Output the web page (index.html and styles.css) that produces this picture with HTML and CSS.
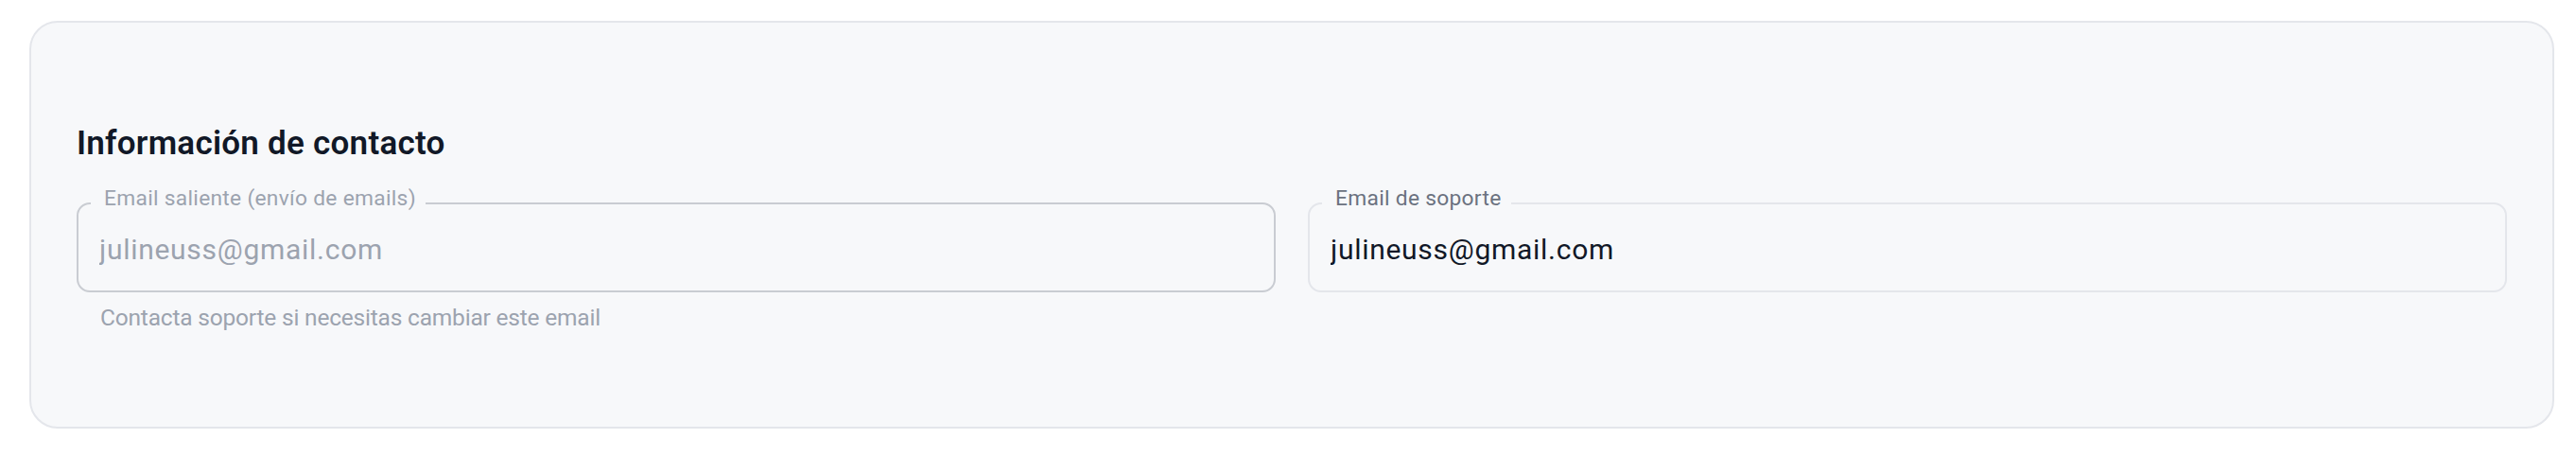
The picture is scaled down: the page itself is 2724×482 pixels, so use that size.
FILE: index.html
```html
<!DOCTYPE html>
<html lang="es">
<head>
<meta charset="utf-8">
<title>Información de contacto</title>
<link rel="stylesheet" href="styles.css">
</head>
<body>
<main class="page">
  <section class="card">
    <h2 class="card-title">Información de contacto</h2>
    <div class="fields">
      <div class="field">
        <fieldset class="outline outline--disabled">
          <legend class="outline-label">Email saliente (envío de emails)</legend>
          <input class="outline-input" type="email" value="julineuss@gmail.com" disabled>
        </fieldset>
        <p class="helper">Contacta soporte si necesitas cambiar este email</p>
      </div>
      <div class="field">
        <fieldset class="outline">
          <legend class="outline-label">Email de soporte</legend>
          <input class="outline-input" type="email" value="julineuss@gmail.com">
        </fieldset>
      </div>
    </div>
  </section>
</main>
</body>
</html>
```
FILE: styles.css
```css
* { box-sizing: border-box; }

html, body {
  margin: 0;
  background: #ffffff;
}

body {
  font-family: Roboto, "Liberation Sans", Arial, sans-serif;
  color: #111827;
}

.page {
  padding: 22px 23px 0 31px;
}

.card {
  background: #f7f8fa;
  border: 2px solid #e4e6eb;
  border-radius: 30px;
  padding: 107px 48px 98px 48px;
}

.card-title {
  margin: 0;
  font-size: 35px;
  line-height: 42px;
  font-weight: 600;
  color: #111827;
  letter-spacing: 0.25px;
}

.fields {
  margin-top: 25px;
  display: grid;
  grid-template-columns: 1fr 1fr;
  column-gap: 34px;
  align-items: start;
}

.field {
  min-width: 0;
}

.outline {
  margin: 0;
  padding: 0;
  min-width: 0;
  border: 2px solid #e4e6eb;
  border-radius: 14px;
}

.outline--disabled {
  border-color: #c9ccd2;
}

.outline-label {
  margin-left: 13px;
  padding: 0 10px 11px 14px;
  font-size: 22.75px;
  line-height: 23px;
  color: #6b7280;
  letter-spacing: 0.3px;
}

.outline--disabled .outline-label {
  color: #9ca3af;
}

.outline-input {
  display: block;
  width: 100%;
  height: 75px;
  margin: 0;
  padding: 0 22px 12px 22px;
  border: 0;
  outline: 0;
  background: transparent;
  font-family: inherit;
  font-size: 30px;
  color: #111827;
  letter-spacing: 0.72px;
}

.outline-input:disabled {
  color: #9ca3af;
  -webkit-text-fill-color: #9ca3af;
  opacity: 1;
}

.helper {
  margin: 10px 0 0 0;
  padding-left: 25px;
  font-size: 24.5px;
  line-height: 34px;
  color: #9ca3af;
  letter-spacing: -0.2px;
}
```
